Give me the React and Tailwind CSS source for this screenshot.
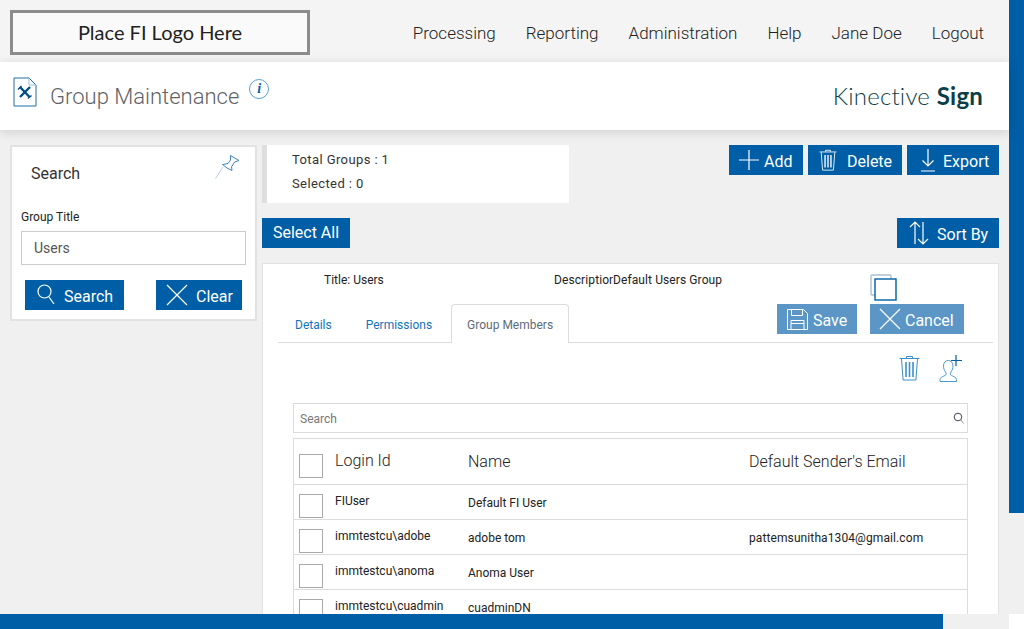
const BLUE = "bg-[#005ea6]";

function PlusIcon() {
  return (
    <svg width="22" height="22" viewBox="0 0 22 22" fill="none" stroke="currentColor" strokeWidth="1.2">
      <path d="M11 1v20M1 11h20" />
    </svg>
  );
}

function TrashIcon({ size = 21, height = 26, className = "" }) {
  return (
    <svg width={size} height={height} viewBox="0 0 21 26" fill="none" stroke="currentColor" strokeWidth="1" className={className}>
      <path d="M7.500 3V1.500h6V3M.5 3.500h20M2.500 4l1.600 21h12.800l1.600-21" />
      <path d="M7 7v15M10.500 7v15M14 7v15" strokeWidth="1.600" />
    </svg>
  );
}

function ExportIcon() {
  return (
    <svg width="16" height="24" viewBox="0 0 16 24" fill="none" stroke="currentColor" strokeWidth="1.2">
      <path d="M8 1v17M2.500 12.500 8 18l5.500-5.500M1 23h14" />
    </svg>
  );
}

function SortIcon() {
  return (
    <svg width="20" height="24" viewBox="0 0 20 24" fill="none" stroke="currentColor" strokeWidth="1.2">
      <path d="M6 23V1M1 6l5-5 5 5M14 1v22M9 18l5 5 5-5" />
    </svg>
  );
}

function SearchIcon() {
  return (
    <svg width="18" height="20" viewBox="0 0 18 20" fill="none" stroke="currentColor" strokeWidth="1.2" className="-mt-[3px]">
      <circle cx="7.500" cy="7.500" r="6.500" />
      <path d="m12 13 5 7" />
    </svg>
  );
}

function CrossIcon() {
  return (
    <svg width="22" height="22" viewBox="0 0 22 22" fill="none" stroke="currentColor" strokeWidth="1.2">
      <path d="m1 1 20 20M21 1 1 21" />
    </svg>
  );
}

function SaveIcon() {
  return (
    <svg width="21" height="21" viewBox="0 0 21 21" fill="none" stroke="currentColor" strokeWidth="1">
      <path d="M.5.5h16l4 4v16H.5z" />
      <path d="M4.500.5v6h11v-6M4 20.500v-9h13v9M4 14.500h13" />
    </svg>
  );
}

function PinIcon() {
  return (
    <svg width="25" height="25" viewBox="0 0 25 25" fill="none" stroke="#3f86c0" strokeWidth="1" className="block">
      <path d="M15.500 1.500 24 6.500l-4.500 1.500-3 5 .5 3.500-5-2.500-4.500-3.500 5.500-1 2.500-3.500z" />
      <path d="M8 13 .5 24.500" stroke="#b5d0e6" />
    </svg>
  );
}

function DocIcon() {
  return (
    <svg width="24" height="30" viewBox="0 0 24 30" fill="none" className="block">
      <path d="M1 1h15l7 7v21H1z" stroke="#1f6fa8" strokeWidth="1" />
      <path d="M16 1v7h7" stroke="#9cc0da" strokeWidth="1" />
      <path d="m7 10 9.500 10M17 10 7 20" stroke="#004f86" strokeWidth="2.400" />
      <path d="M5 12.500 8.500 9M15 21.500l3.500-3" stroke="#004f86" strokeWidth="1.400" />
    </svg>
  );
}

function InfoIcon() {
  return (
    <span className="flex h-[20px] w-[20px] items-center justify-center rounded-full border border-[#5a9fd0] font-['Liberation_Serif',serif] text-[14px] font-bold italic leading-none text-[#005ea6]">
      i
    </span>
  );
}

function AddUserIcon() {
  return (
    <svg width="23" height="27" viewBox="0 0 23 27" fill="none" className="block">
      <path
        d="M1 26.500v-2c0-2 3-3 5-4 1.500-.8 1.500-2 .5-3.500C5 15 4.500 13 4.500 11c0-3.500 2-5.500 4.800-5.500 2.700 0 4.700 2 4.700 5.500 0 2-.7 4-2 6-1 1.500-1 2.700.5 3.500 2 1 5 2 5 4v2z"
        stroke="#4a9bd4"
      />
      <path d="M17 0v11M12 5.500h11" stroke="#005ea6" strokeWidth="1.200" />
    </svg>
  );
}

function CopyBoxes() {
  return (
    <svg width="27" height="27" viewBox="0 0 27 27" fill="none" className="block">
      <rect x="1" y="1" width="20" height="20" rx="1" stroke="#a9c0d2" strokeWidth="1.400" />
      <rect x="5" y="5" width="21" height="21" fill="#fff" stroke="#005ea6" strokeWidth="1.400" />
    </svg>
  );
}

function Btn({ icon, children, className = "" }) {
  return (
    <button className={`flex h-[30px] shrink-0 items-center whitespace-nowrap text-[16px] font-normal text-white ${className}`}>
      {icon}
      {children}
    </button>
  );
}

function Checkbox() {
  return <span className="block h-[24px] w-[24px] shrink-0 border border-[#aaaaaa] bg-white" />;
}

const NAV = ["Processing", "Reporting", "Administration", "Help", "Jane Doe", "Logout"];

const MEMBERS = [
  { login: "FIUser", name: "Default FI User", email: "" },
  { login: "immtestcu\\adobe", name: "adobe tom", email: "pattemsunitha1304@gmail.com" },
  { login: "immtestcu\\anoma", name: "Anoma User", email: "" },
  { login: "immtestcu\\cuadmin", name: "cuadminDN", email: "" },
];

function MemberRow({ member }) {
  return (
    <div className="flex h-[35px] shrink-0 border-t border-[#dcdcdc] pl-[5px] text-[12px] text-[#222]">
      <div className="mt-[9px]">
        <Checkbox />
      </div>
      <span className="ml-[12px] mt-[7px] w-[133px] whitespace-nowrap">{member.login}</span>
      <span className="mt-[9px] w-[281px] whitespace-nowrap">{member.name}</span>
      <span className="mt-[9px] whitespace-nowrap tracking-[0.1px]">{member.email}</span>
    </div>
  );
}

export default function App() {
  return (
    <div className="flex h-[629px] w-[1024px] overflow-hidden bg-white font-['Roboto',sans-serif]">
      <div className="flex w-[1009px] shrink-0 flex-col">
        {/* top nav */}
        <header className="flex h-[62px] shrink-0 items-center justify-between bg-[#f4f4f4] pb-[7px] pl-[10px] pr-[25px] pt-[10px]">
          <div className="flex h-[45px] w-[300px] items-center justify-center border-[3px] border-[#8c8c8c] bg-[#fafafa] pb-[2px] font-['Lato',sans-serif] text-[20px] font-normal text-[#222]">
            Place FI Logo Here
          </div>
          <nav className="flex gap-[30px] pt-[2px] text-[17px] font-light text-[#222]">
            {NAV.map((item) => (
              <span key={item}>{item}</span>
            ))}
          </nav>
        </header>

        {/* page title */}
        <div className="relative z-10 flex h-[68px] shrink-0 justify-between bg-white pl-[13px] pr-[26px] shadow-[0_2px_10px_rgba(0,0,0,0.14)]">
          <div className="flex items-start">
            <div className="mt-[15px]">
              <DocIcon />
            </div>
            <h1 className="ml-[13px] mt-[18px] text-[22px] font-light text-[#5f6368]">Group Maintenance</h1>
            <div className="ml-[10px] mt-[17px]">
              <InfoIcon />
            </div>
          </div>
          <div className="mt-[19px] whitespace-nowrap font-['Lato',sans-serif] text-[24px] font-light leading-[30px] tracking-[0.2px] text-[#0b3f47]">
            Kinective <span className="font-bold">Sign</span>
          </div>
        </div>

        <main className="flex min-h-0 flex-1 items-start overflow-hidden bg-[#f0f0f0] pl-[10px] pt-[15px]">
          {/* search card */}
          <aside className="h-[176px] w-[247px] shrink-0 border-2 border-[#e2e2e2] bg-white px-[9px]">
            <div className="flex h-[63px] items-start justify-between pl-[10px] pr-[6px]">
              <span className="mt-[17px] text-[16px] leading-[20px] text-[#333]">Search</span>
              <div className="mt-[7px]">
                <PinIcon />
              </div>
            </div>
            <label className="block text-[12px] leading-[14px] text-[#222]">Group Title</label>
            <div className="mt-[7px] flex h-[34px] items-center border border-[#cccccc] pl-[12px] text-[14px] text-[#555]">Users</div>
            <div className="mt-[15px] flex justify-between pl-[4px] pr-[4px]">
              <Btn icon={<SearchIcon />} className={`w-[99px] pl-[12px] ${BLUE}`}>
                <span className="ml-[9px] pt-[4px]">Search</span>
              </Btn>
              <Btn icon={<CrossIcon />} className={`w-[86px] pl-[10px] ${BLUE}`}>
                <span className="ml-[8px] pt-[4px]">Clear</span>
              </Btn>
            </div>
          </aside>

          <section className="ml-[5px] w-[737px] shrink-0">
            <div className="flex h-[58px] items-start justify-between">
              <div className="h-[58px] w-[307px] border-l-[5px] border-[#dedede] bg-white pl-[25px] pt-[3px] text-[13px] leading-[24px] tracking-[0.4px] text-[#333]">
                <div>Total Groups : 1</div>
                <div>Selected : 0</div>
              </div>
              <div className="flex gap-[5px]">
                <Btn icon={<PlusIcon />} className={`w-[74px] pl-[9px] ${BLUE}`}>
                  <span className="ml-[4px] pt-[4px]">Add</span>
                </Btn>
                <Btn icon={<TrashIcon size={18} height={22} />} className={`w-[94px] pl-[11px] ${BLUE}`}>
                  <span className="ml-[10px] pt-[4px]">Delete</span>
                </Btn>
                <Btn icon={<ExportIcon />} className={`w-[92px] pl-[13px] ${BLUE}`}>
                  <span className="ml-[7px] pt-[4px]">Export</span>
                </Btn>
              </div>
            </div>

            <div className="mt-[15px] flex justify-between">
              <Btn className={`w-[88px] justify-center ${BLUE}`}>Select All</Btn>
              <Btn icon={<SortIcon />} className={`w-[102px] pl-[12px] ${BLUE}`}>
                <span className="ml-[8px] pt-[4px]">Sort By</span>
              </Btn>
            </div>

            {/* group detail */}
            <div className="mt-[15px] h-[400px] border border-[#e2e2e2] bg-white">
              <div className="flex h-[40px] items-start">
                <span className="ml-[61px] mt-[9px] w-[230px] text-[12px] leading-[14px] text-[#222]">Title: Users</span>
                <span className="mt-[9px] flex w-[316px] text-[12px] leading-[14px] tracking-[0.1px] text-[#222]">
                  <span className="w-[59px] overflow-hidden whitespace-nowrap">Description</span>
                  <span>Default Users Group</span>
                </span>
                <div className="mt-[10px]">
                  <CopyBoxes />
                </div>
              </div>

              <div className="ml-[15px] mr-[5px] flex h-[39px] justify-between border-b border-[#dcdcdc] pr-[29px]">
                <div className="flex text-[12px]">
                  <span className="ml-[17px] mt-[12px] text-[#1273b8]">Details</span>
                  <span className="ml-[34px] mt-[12px] text-[#1273b8]">Permissions</span>
                  <span className="ml-[19px] h-[39px] w-[118px] rounded-t-[4px] border border-b-0 border-[#dcdcdc] bg-white pl-[15px] pt-[11px] text-[#5f6b7a]">
                    Group Members
                  </span>
                </div>
                <div className="flex gap-[13px]">
                  <Btn icon={<SaveIcon />} className="w-[80px] bg-[#5b96c6] pl-[10px]">
                    <span className="ml-[5px] pt-[4px]">Save</span>
                  </Btn>
                  <Btn icon={<CrossIcon />} className="w-[94px] bg-[#5b96c6] pl-[9px]">
                    <span className="ml-[4px] pt-[4px]">Cancel</span>
                  </Btn>
                </div>
              </div>

              <div className="flex h-[60px] justify-end pr-[36px] pt-[12px]">
                <TrashIcon className="text-[#3d8fc9]" />
                <div className="ml-[19px]">
                  <AddUserIcon />
                </div>
              </div>

              <div className="mx-[30px] w-[675px]">
                <div className="flex h-[30px] items-center justify-between border border-[#dcdcdc] pl-[6px] pr-[3px] text-[12px] text-[#777]">
                  <span className="pt-[2px]">Search</span>
                  <svg width="11" height="12" viewBox="0 0 11 12" fill="none" className="block">
                    <circle cx="5" cy="5" r="3.800" stroke="#445" strokeWidth="1" />
                    <path d="m8 8 2.500 3.500" stroke="#999" strokeWidth="1" />
                  </svg>
                </div>
                <div className="mt-[5px] border border-b-0 border-[#dcdcdc]">
                  <div className="flex h-[45px] pl-[5px] text-[16px] font-light text-[#222]">
                    <div className="mt-[15px]">
                      <Checkbox />
                    </div>
                    <span className="ml-[12px] mt-[10px] w-[133px]">Login Id</span>
                    <span className="mt-[11px] w-[281px]">Name</span>
                    <span className="mt-[11px]">Default Sender's Email</span>
                  </div>
                  {MEMBERS.map((member) => (
                    <MemberRow key={member.login} member={member} />
                  ))}
                </div>
              </div>
            </div>
          </section>
        </main>

        {/* horizontal scrollbar */}
        <div className="flex h-[15px] shrink-0 bg-[#f0f0f0]">
          <div className={`w-[943px] ${BLUE}`} />
        </div>
      </div>

      {/* vertical scrollbar */}
      <div className="flex h-[614px] w-[15px] shrink-0 flex-col bg-[#f0f0f0]">
        <div className={`h-[513px] ${BLUE}`} />
      </div>
    </div>
  );
}
